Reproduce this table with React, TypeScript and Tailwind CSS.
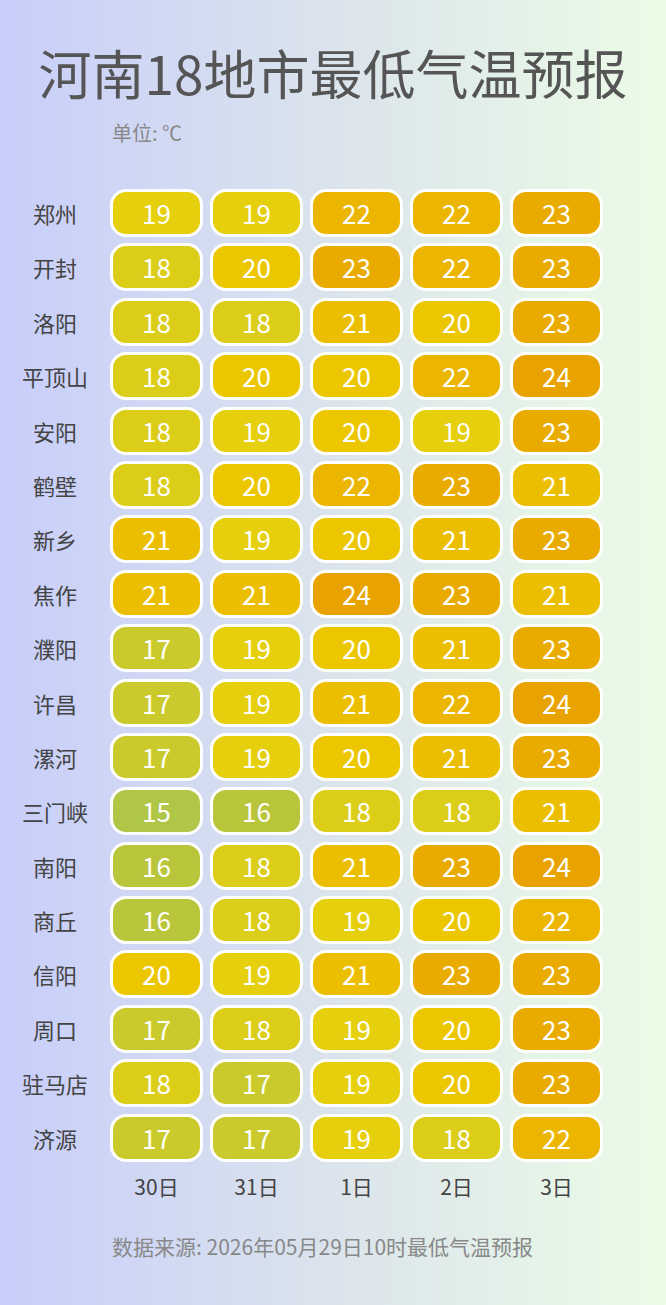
const rows: [string, number[]][] = [
  ["郑州", [19, 19, 22, 22, 23]],
  ["开封", [18, 20, 23, 22, 23]],
  ["洛阳", [18, 18, 21, 20, 23]],
  ["平顶山", [18, 20, 20, 22, 24]],
  ["安阳", [18, 19, 20, 19, 23]],
  ["鹤壁", [18, 20, 22, 23, 21]],
  ["新乡", [21, 19, 20, 21, 23]],
  ["焦作", [21, 21, 24, 23, 21]],
  ["濮阳", [17, 19, 20, 21, 23]],
  ["许昌", [17, 19, 21, 22, 24]],
  ["漯河", [17, 19, 20, 21, 23]],
  ["三门峡", [15, 16, 18, 18, 21]],
  ["南阳", [16, 18, 21, 23, 24]],
  ["商丘", [16, 18, 19, 20, 22]],
  ["信阳", [20, 19, 21, 23, 23]],
  ["周口", [17, 18, 19, 20, 23]],
  ["驻马店", [18, 17, 19, 20, 23]],
  ["济源", [17, 17, 19, 18, 22]],
];

const days = ["30日", "31日", "1日", "2日", "3日"];

// colour scale: cooler = greener, warmer = more orange
const cellColor: Record<number, string> = {
  15: "bg-[#b0c646]",
  16: "bg-[#b9c63c]",
  17: "bg-[#cbca2c]",
  18: "bg-[#dbcd18]",
  19: "bg-[#e6cf0c]",
  20: "bg-[#ecc700]",
  21: "bg-[#ecbe00]",
  22: "bg-[#ebb500]",
  23: "bg-[#eaab00]",
  24: "bg-[#e9a300]",
};

function TempCell({ value }: { value: number }) {
  return (
    <div
      className={`flex h-[48px] w-[93px] items-center justify-center rounded-[16px] border-[3px] border-white text-[26px] leading-none text-white ${cellColor[value]}`}
    >
      {value}
    </div>
  );
}

export default function App() {
  return (
    <div
      className="h-[1305px] w-[666px] overflow-hidden bg-gradient-to-r from-[#c8cefa] via-[#dbe4ec] to-[#ecfce6]"
      style={{ fontFamily: '"Noto Sans CJK SC", "Noto Sans", sans-serif' }}
    >
      <h1 className="pt-[46px] text-center text-[53px] leading-[53px] font-normal text-[#555555]">
        河南18地市最低气温预报
      </h1>
      <div className="mt-[22px] pl-[112px] text-[20px] leading-[24px] text-[#888888]">
        单位: ℃
      </div>

      <div className="mt-[44px] flex flex-col gap-y-[6.4px]">
        {rows.map(([city, temps]) => (
          <div key={city} className="flex items-center">
            <div className="w-[110px] text-center text-[22px] leading-none text-[#444444]">
              {city}
            </div>
            <div className="flex gap-x-[7px]">
              {temps.map((t, i) => (
                <TempCell key={i} value={t} />
              ))}
            </div>
          </div>
        ))}
      </div>

      <div className="mt-[12px] flex pl-[110px]">
        <div className="flex gap-x-[7px]">
          {days.map((d) => (
            <div
              key={d}
              className="w-[93px] text-center text-[21px] leading-[24px] text-[#444444]"
            >
              {d}
            </div>
          ))}
        </div>
      </div>

      <div className="mt-[36px] pl-[112px] text-[21px] leading-[24px] text-[#888888]">
        数据来源: 2026年05月29日10时最低气温预报
      </div>
    </div>
  );
}
